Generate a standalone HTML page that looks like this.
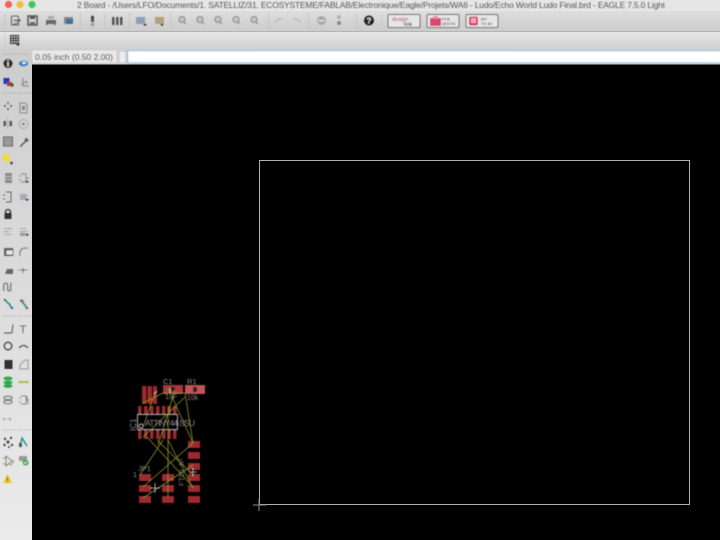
<!DOCTYPE html>
<html><head><meta charset="utf-8"><style>
html,body{margin:0;padding:0;width:720px;height:540px;overflow:hidden;background:#000}
svg{display:block;position:absolute;left:0;top:0}
text{font-family:"Liberation Sans",sans-serif}
</style></head><body>
<svg width="720" height="540" viewBox="0 0 720 540" xmlns="http://www.w3.org/2000/svg">
<defs>
<linearGradient id="tb" x1="0" y1="0" x2="0" y2="1"><stop offset="0" stop-color="#dedede"/><stop offset="1" stop-color="#cccccc"/></linearGradient>
<linearGradient id="t2" x1="0" y1="0" x2="0" y2="1"><stop offset="0" stop-color="#e6e6e6"/><stop offset="1" stop-color="#cfcfcf"/></linearGradient>
<linearGradient id="sd" x1="0" y1="0" x2="0" y2="1"><stop offset="0" stop-color="#cdcdcd"/><stop offset="1" stop-color="#ebebeb"/></linearGradient>
<filter id="b" x="-2%" y="-2%" width="104%" height="104%"><feGaussianBlur stdDeviation="0.5"/></filter>
<filter id="p" x="-5%" y="-5%" width="110%" height="110%"><feGaussianBlur stdDeviation="0.4"/></filter>
</defs>
<rect width="720" height="540" fill="#000"/>
<!-- title -->
<rect width="720" height="11" fill="#e6e6e6"/>
<!-- toolbars -->
<rect y="11" width="720" height="20" fill="url(#tb)"/>
<rect y="31" width="720" height="1" fill="#b5b5b5"/>
<rect y="32" width="720" height="17" fill="url(#t2)"/>
<rect y="49" width="720" height="16" fill="#d6d6d6"/>
<rect x="0" y="49" width="32" height="491" fill="url(#sd)"/>
<g filter="url(#b)">
<circle cx="8.500" cy="4.500" r="3.600" fill="#f0625a"/><circle cx="20" cy="4.500" r="3.600" fill="#f5b93e"/><circle cx="32" cy="4.500" r="3.600" fill="#3ec94c"/>
<text x="77" y="8" font-size="8.400" fill="#555" textLength="588" lengthAdjust="spacing">2 Board - /Users/LFO/Documents/1. SATELLIZ/31. ECOSYSTEME/FABLAB/Electronique/Eagle/Projets/WA6 - Ludo/Echo World Ludo Final.brd - EAGLE 7.5.0 Light</text>
<!-- toolbar icons -->
<path d="M5 15v1M5 18v1M5 21v1M5 24v1" stroke="#999"/>
<path d="M11.500 16h6l1 1v3M18.500 23v2h-7z M11.500 16v9" stroke="#666" stroke-width="1.100" fill="none"/>
<path d="M14 20.500h5" stroke="#555" stroke-width="1.200"/><path d="M18 18.500l3 2-3 2z" fill="#555"/>
<path d="M28 16h9v9h-9z" fill="none" stroke="#555" stroke-width="1.500"/><rect x="30" y="16" width="5" height="3" fill="#555"/><rect x="30" y="22" width="5" height="3" fill="#666"/>
<rect x="46" y="20" width="10" height="5" rx="1" fill="#666"/><rect x="48" y="16" width="6" height="3" fill="#aaa"/><rect x="48" y="24" width="6" height="2" fill="#ccc"/>
<rect x="64" y="17" width="9" height="7" rx="1" fill="#888"/><rect x="66" y="19" width="7" height="5" rx="1" fill="#3a6f9e"/>
<rect x="80" y="13" width="1" height="16" fill="#c4c4c4"/>
<path d="M92.500 15l2 3h-4z" fill="#333"/><rect x="91" y="18" width="3" height="4" fill="#555"/><circle cx="92.500" cy="24.500" r="1.700" fill="#999"/>
<rect x="104" y="13" width="1" height="16" fill="#c4c4c4"/>
<g fill="#555"><rect x="112" y="17" width="2.500" height="8"/><rect x="116" y="17" width="2.500" height="8"/><rect x="120" y="17" width="2.500" height="8"/></g>
<rect x="129" y="13" width="1" height="16" fill="#c4c4c4"/>
<rect x="136" y="17" width="9" height="7" fill="#8da0b8"/><path d="M143 24h4l-2 2z" fill="#222"/>
<rect x="155" y="17" width="9" height="7" fill="#b5a078"/><path d="M160 24h4l-2 2z" fill="#222"/>
<rect x="170" y="13" width="1" height="16" fill="#c4c4c4"/>
<g fill="#c4c4c4" stroke="#888" stroke-width="1.100">
<circle cx="182" cy="19.500" r="3"/><path d="M184 22l2 2"/>
<circle cx="200" cy="19.500" r="3"/><path d="M202 22l2 2"/>
<circle cx="218" cy="19.500" r="3"/><path d="M220 22l2 2"/>
<circle cx="236" cy="19.500" r="3"/><path d="M238 22l2 2"/>
<circle cx="254" cy="19.500" r="3"/><path d="M256 22l2 2"/>
</g>
<rect x="268" y="13" width="1" height="16" fill="#c4c4c4"/>
<path d="M275 23q2-5 7-4M293 19q5-1 7 4" stroke="#bcbcbc" stroke-width="1.500" fill="none"/>
<rect x="308" y="13" width="1" height="16" fill="#c4c4c4"/>
<circle cx="321.500" cy="20.500" r="4.500" fill="#a8a8a8"/><rect x="318.500" y="20" width="6" height="1.300" fill="#e4e4e4"/>
<circle cx="339" cy="17" r="1.800" fill="#aaa"/><circle cx="339" cy="23" r="2" fill="#888"/>
<rect x="356" y="13" width="1" height="16" fill="#c4c4c4"/>
<circle cx="369" cy="20.500" r="5" fill="#222"/>
<text x="369" y="23.500" font-size="8" font-weight="bold" fill="#eee" text-anchor="middle">?</text>
<path d="M382 15v1M382 18v1M382 21v1M382 24v1" stroke="#aaa"/>
<rect x="388" y="14.500" width="32" height="13" rx="1.500" fill="#e6e6e6" stroke="#666"/>
<text x="392" y="21" font-size="5.500" fill="#c5304f">design</text><text x="404" y="26" font-size="5.500" fill="#222">link</text>
<rect x="427" y="14.500" width="32" height="13" rx="1.500" fill="#e6e6e6" stroke="#666"/>
<path d="M430 18h11v8h-11z" fill="#d44a70"/><path d="M433 16h5v3h-5z" fill="#e98aa2"/>
<text x="442" y="20.500" font-size="3.800" fill="#222">PCB</text><text x="442" y="25" font-size="3.800" fill="#222">QUOTE</text>
<rect x="466" y="14.500" width="32" height="13" rx="1.500" fill="#e6e6e6" stroke="#666"/>
<rect x="469" y="16.500" width="9" height="9" rx="2" fill="#d8406b"/><rect x="471" y="18" width="5" height="5" fill="#efa9bb"/>
<text x="481" y="20.500" font-size="3.800" fill="#222">IDF</text><text x="481" y="25" font-size="3.800" fill="#222">TO 3D</text>
<!-- second toolbar -->
<path d="M5 35v1M5 38v1M5 41v1M5 44v1" stroke="#999"/>
<g fill="none" stroke="#333" stroke-width="1"><rect x="10.500" y="35.500" width="8" height="8"/><path d="M13.200 35.500v8M15.800 35.500v8M10.500 38.200h8M10.500 40.800h8"/></g>
<path d="M16 44h4l-2 2z" fill="#222"/>
<!-- left icons -->
<path d="M3 54h25" stroke="#999" stroke-dasharray="1 2"/>
<circle cx="8" cy="63.500" r="4.500" fill="#2a2a2a"/><rect x="7.200" y="62" width="1.600" height="4.500" fill="#ddd"/><rect x="7.200" y="60" width="1.600" height="1.300" fill="#ddd"/>
<ellipse cx="23.500" cy="63.500" rx="4.500" ry="2.800" fill="#2f7fc0"/><ellipse cx="24" cy="63" rx="2" ry="1.200" fill="#dfeefa"/>
<rect x="3.500" y="78" width="6" height="6" fill="#2438b8"/><rect x="7" y="82" width="5" height="4" fill="#c52a3c"/><circle cx="12" cy="85" r="1.700" fill="#1c6a2a"/>
<path d="M23 78v8h6M21 84h3M26 81v3M24 82h4" stroke="#888" fill="none"/>
<path d="M3 93h28" stroke="#999" stroke-dasharray="1 2"/>
<g fill="#777"><rect x="7" y="102" width="2" height="2"/><rect x="7" y="108" width="2" height="2"/><rect x="4" y="105" width="2" height="2"/><rect x="10" y="105" width="2" height="2"/></g>
<path d="M20 103h5l2 2v8h-7z" fill="none" stroke="#888"/><rect x="22" y="106" width="3" height="4" fill="#888"/>
<rect x="3.500" y="121" width="2.500" height="5" fill="#555"/><rect x="7.200" y="118" width="1" height="11" fill="#aaa"/><rect x="9.500" y="121" width="2.500" height="5" fill="#555"/>
<circle cx="23.500" cy="124" r="4.500" fill="none" stroke="#aaa"/><circle cx="23.500" cy="124" r="1.200" fill="#777"/>
<rect x="3.500" y="137" width="9" height="9" fill="#999" stroke="#666"/>
<path d="M26.500 137.500l-2 2 .6 1.300-4.500 4.500-1 .8 1.200 .9 5-5 1.500-.2 2-2.300-1.500.2-.8-1z" fill="#555"/>
<circle cx="6.500" cy="158" r="3.800" fill="#f3dc30"/><circle cx="11.500" cy="163" r="1.300" fill="#333"/>
<rect x="5" y="173" width="7" height="10" rx="1" fill="#888"/><rect x="5" y="176" width="7" height=".8" fill="#ccc"/><rect x="5" y="179" width="7" height=".8" fill="#ccc"/>
<path d="M21 174h5v8h-5M19 176h2M19 180h2M26 178h3" fill="none" stroke="#888"/><path d="M25 181h4l-2 2z" fill="#222"/>
<path d="M6 192h5v10h-5M3 195h2M3 199h2" fill="none" stroke="#666"/>
<rect x="20" y="194" width="7" height="6" fill="#aab"/><path d="M25 199h4l-2 2z" fill="#222"/>
<path d="M5.500 214v-2a2.500 2.500 0 0 1 5 0v2" fill="none" stroke="#333" stroke-width="1.300"/><rect x="4.500" y="213" width="7" height="6" rx="1" fill="#333"/>
<g fill="#aaa"><rect x="4" y="228" width="8" height="1.200"/><rect x="4" y="231" width="5" height="1.200"/><rect x="4" y="234" width="8" height="1"/></g>
<g fill="#aaa"><rect x="20" y="228" width="6" height="1.200"/><rect x="20" y="231" width="8" height="1.200"/></g><rect x="20" y="233" width="5" height="3" fill="#999"/><path d="M25 234h4l-2 2z" fill="#222"/>
<rect x="4" y="248" width="9" height="8" fill="#666"/><rect x="6" y="250" width="7" height="5" fill="#e6e6e6" stroke="#444" stroke-width=".7"/>
<path d="M20 256v-3q0-5 6-5h2" fill="none" stroke="#888" stroke-width="1.300"/>
<path d="M5 274l2-5h6v5z" fill="#666"/>
<path d="M23 268v5M20 270h6M18 270h1M27 270h1" stroke="#777"/>
<path d="M4 291v-5q0-3 2-3t2 3v3q0 2 1.500 2t1.500-2v-3q0-3 1-3" fill="none" stroke="#666" stroke-width="1.100" transform="translate(-.3 0)"/>
<path d="M4 299l6 6 2 4" fill="none" stroke="#1e8a8a" stroke-width="1.500"/><circle cx="5" cy="300" r="1" fill="#1a7d3a"/><circle cx="12" cy="308" r="1.200" fill="#3d6bb5"/>
<path d="M20 300l5 5 2 4" fill="none" stroke="#1e8a8a" stroke-width="1.500"/><path d="M20 300l4 1" stroke="#b8326a" stroke-width="1.300"/><circle cx="27" cy="308" r="1.200" fill="#b8326a"/>
<path d="M3 316h28" stroke="#999" stroke-dasharray="1 2"/>
<path d="M4 333h7l1-.5 1-8" fill="none" stroke="#666" stroke-width="1.200"/>
<text x="23" y="333" font-size="11" fill="#666" text-anchor="middle">T</text>
<circle cx="8" cy="346" r="3.800" fill="none" stroke="#444" stroke-width="1.300"/>
<path d="M19 348q4.500-5 9 0" fill="none" stroke="#555" stroke-width="1.300"/>
<rect x="4.500" y="360" width="8" height="9" fill="#333"/>
<path d="M20 369v-4l5-5h3v9z" fill="none" stroke="#999"/>
<g fill="#2aa84a"><ellipse cx="8" cy="378.500" rx="4.500" ry="1.900"/><ellipse cx="8" cy="382.500" rx="4.500" ry="1.900"/><ellipse cx="8" cy="386" rx="4.500" ry="1.900"/></g>
<rect x="19" y="381.500" width="9" height="1.200" fill="#6fae4a"/><circle cx="20" cy="382" r="1.300" fill="#c8b030"/><circle cx="27" cy="382" r="1.300" fill="#c8b030"/>
<ellipse cx="8" cy="398" rx="4.200" ry="1.800" fill="none" stroke="#666"/><ellipse cx="8" cy="402" rx="4.200" ry="1.800" fill="none" stroke="#666"/>
<path d="M21 396h5v8h-5M19 398h2M19 402h2M26 400h3M27 396l1 8" fill="none" stroke="#888"/>
<text x="3" y="420" font-size="3.500" fill="#555">[•—•]</text>
<path d="M3 430h28" stroke="#999" stroke-dasharray="1 2"/>
<g fill="#444"><circle cx="5" cy="439" r="1.200"/><circle cx="11" cy="438" r="1.200"/><circle cx="8" cy="442" r="1.500"/><circle cx="4.500" cy="445" r="1.200"/><circle cx="12" cy="445" r="1.200"/><circle cx="9" cy="447" r="1"/></g>
<path d="M20 446l2-8 5 8" fill="none" stroke="#1e8a8a" stroke-width="1.400"/><rect x="19" y="443" width="3" height="4" fill="#555"/>
<path d="M6 456l6 5-6 5zM3 458h3M3 464h3M12 461h2" fill="none" stroke="#888"/><path d="M9 463l2 2 3-4" fill="none" stroke="#8fae3a"/>
<rect x="19" y="456" width="8" height="5" fill="#999"/><circle cx="25.500" cy="462.500" r="3" fill="#4ea84a"/><path d="M24 462.500l1 1 2-2" fill="none" stroke="#fff" stroke-width=".7"/>
<path d="M7.500 474l4.500 9h-9z" fill="#f2c81e"/><rect x="7" y="477" width="1" height="3.500" fill="#333"/><rect x="7" y="481" width="1" height="1" fill="#333"/>
<!-- command row -->
<rect x="32" y="50" width="85" height="13" fill="#e9e9e9" stroke="#c4c4c4" stroke-width=".7"/>
<text x="35" y="60" font-size="8.500" fill="#222">0.05 inch (0.50 2.00)</text>
<rect x="119" y="51" width="7" height="12" fill="#ececec" stroke="#bbb" stroke-width=".7"/>
<rect x="127.500" y="50.500" width="594" height="12.500" fill="#fff" stroke="#a4c3e6" stroke-width="1.500"/>
</g>
<rect x="32" y="64.500" width="688" height="476" fill="#000"/>
<!-- board outline -->
<rect x="259.500" y="160.500" width="430" height="344" fill="none" stroke="#b0b0b0" stroke-width="1"/>
<path d="M259 499v12M253 505h13" stroke="#8a8a8a" stroke-width="1" fill="none"/>
<!-- PCB -->
<g filter="url(#p)">
<g fill="#9c2c2e">
<rect x="142" y="386" width="4.500" height="18"/><rect x="147.500" y="386" width="4.500" height="18"/><rect x="153" y="386" width="4" height="18"/>
<rect x="163" y="385" width="20" height="9" fill="#a8383c"/><rect x="185" y="385" width="20" height="9" fill="#c0555c"/>
<rect x="138" y="406" width="3.500" height="9"/><rect x="144" y="406" width="3.500" height="9"/><rect x="150" y="406" width="3.500" height="9"/><rect x="156" y="406" width="3.500" height="9"/><rect x="162" y="406" width="3.500" height="9"/><rect x="167.500" y="406" width="3.500" height="9"/><rect x="173" y="406" width="3.500" height="9"/>
<rect x="138" y="430" width="3.500" height="9"/><rect x="144" y="430" width="3.500" height="9"/><rect x="150" y="430" width="3.500" height="9"/><rect x="156" y="430" width="3.500" height="9"/><rect x="162" y="430" width="3.500" height="9"/><rect x="167.500" y="430" width="3.500" height="9"/><rect x="173" y="430" width="3.500" height="9"/>
<rect x="188" y="441" width="12" height="7"/><rect x="188" y="452" width="12" height="7"/><rect x="188" y="463" width="12" height="7"/><rect x="188" y="474" width="12" height="7"/><rect x="188" y="485" width="12" height="7"/><rect x="188" y="496" width="12" height="7"/>
<rect x="139" y="474" width="12" height="7"/><rect x="139" y="485" width="12" height="7"/><rect x="139" y="496" width="12" height="7"/>
<rect x="162" y="474" width="12" height="7"/><rect x="162" y="485" width="12" height="7"/><rect x="162" y="496" width="12" height="7"/>
</g>
<rect x="171" y="387" width="4" height="4" fill="#222"/><rect x="193" y="387" width="4" height="5" fill="#222"/>
<rect x="137.500" y="414.500" width="40" height="15" fill="none" stroke="#aaa"/>
<circle cx="141" cy="426" r="2" fill="none" stroke="#bbb"/>
<text x="145" y="426" font-size="8.500" fill="#8a8a8a" textLength="50">ATTINY44-SSU</text>
<text x="136" y="431" font-size="8" fill="#888" transform="rotate(-90 136 431)">IC1</text>
<text x="163" y="384" font-size="7.500" fill="#888">C1</text><text x="187" y="384" font-size="7.500" fill="#888">R1</text>
<text x="165" y="399" font-size="7" fill="#888">1uF</text><text x="187" y="400" font-size="7" fill="#888">10k</text>
<text x="138" y="471" font-size="7.500" fill="#888">JP1</text><text x="133" y="477" font-size="7" fill="#888">1</text>
<text x="184" y="486" font-size="7.500" fill="#777" transform="rotate(-90 184 486)">FTDI JP</text>
<g stroke="#8f8f2c" stroke-width=".8" fill="none">
<path d="M143 403L163 393L185 393L193 443L143 487"/>
<path d="M193 465L143 498M140 475L163 440M168 407L168 497M147 437L193 487M157 440L193 475M155 393L142 430M185 397L143 437M168 388L193 443M175 390L158 445M168 440L193 488"/>
</g>
<path d="M155 483v10M150 488h10M193 468v8M189 472h8M157 391l-3 3M170 388v5" stroke="#ccc" stroke-width=".8" fill="none"/>
</g>
</svg>
</body></html>
